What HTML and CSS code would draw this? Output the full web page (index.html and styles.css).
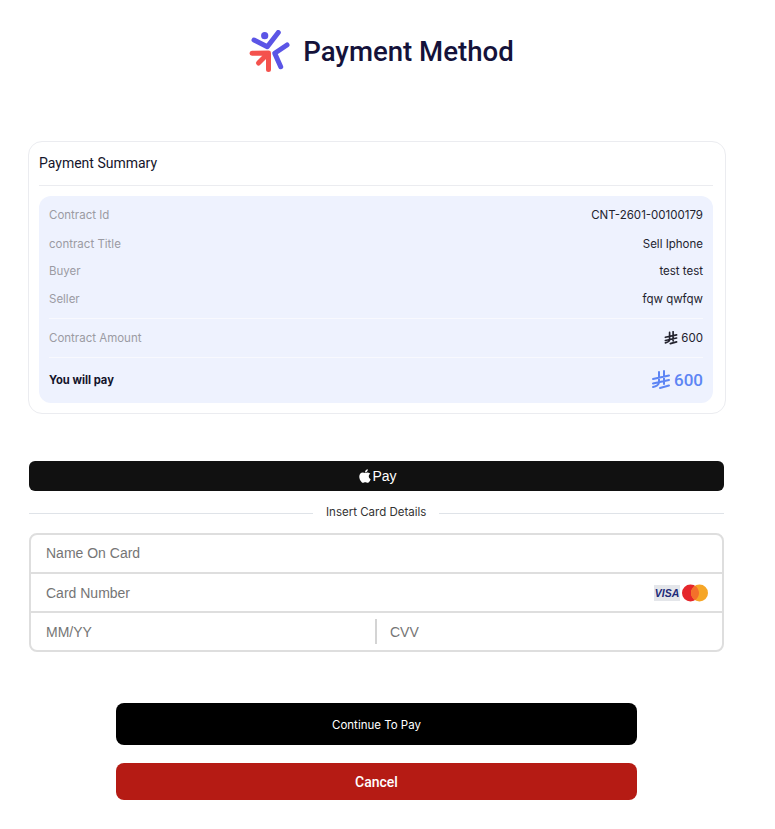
FILE: index.html
```html
<!DOCTYPE html>
<html lang="en">
<head>
  <meta charset="UTF-8">
  <title>Payment Method</title>
  <link rel="stylesheet" href="styles.css">
</head>
<body>
  <div class="page">
    <div class="header">
      <svg class="logo" viewBox="0 0 42 42" width="42" height="42">
        <circle cx="15.7" cy="5.7" r="3.6" fill="#5b55e6"/>
        <path d="M5 10 L18.3 16.7 L29.3 2.5" fill="none" stroke="#5b55e6" stroke-width="5" stroke-linecap="round" stroke-linejoin="round"/>
        <path d="M38 15 L25.7 23.3 L31.7 36.7" fill="none" stroke="#5b55e6" stroke-width="5" stroke-linecap="round" stroke-linejoin="round"/>
        <path d="M3 23.3 L19.5 23 L19.5 39.5" fill="none" stroke="#f4524d" stroke-width="5" stroke-linecap="round" stroke-linejoin="round"/>
        <path d="M9.5 33 L18 24.5" fill="none" stroke="#f4524d" stroke-width="5" stroke-linecap="round"/>
        <path d="M11 23 L19.5 23 L19.5 31.5 Z" fill="#f4524d"/>
      </svg>
      <h1 class="page-title">Payment Method</h1>
    </div>

    <div class="summary">
      <div class="summary-title">Payment Summary</div>
      <div class="details">
        <div class="row"><span class="label">Contract Id</span><span class="value">CNT-2601-00100179</span></div>
        <div class="row row-title"><span class="label">contract Title</span><span class="value">Sell Iphone</span></div>
        <div class="row"><span class="label">Buyer</span><span class="value">test test</span></div>
        <div class="row"><span class="label">Seller</span><span class="value">fqw qwfqw</span></div>
        <div class="row row-amount">
          <span class="label">Contract Amount</span>
          <span class="value amount">
            <svg class="riyal" viewBox="0 0 20 20" width="14" height="14"><path d="M8 2 L8 13 Q7 16 2 17 M13 1 L13 14 M2 9 L18 5.5 M2 13.5 L18 10 M9 18 L18 15.5" fill="none" stroke="currentColor" stroke-width="2.4" stroke-linecap="round"/></svg>
            600
          </span>
        </div>
        <div class="row row-total">
          <span class="total-label">You will pay</span>
          <span class="total-value">
            <svg class="riyal" viewBox="0 0 20 20" width="20" height="20"><path d="M8 2 L8 13 Q7 16 2 17 M13 1 L13 14 M2 9 L18 5.5 M2 13.5 L18 10 M9 18 L18 15.5" fill="none" stroke="currentColor" stroke-width="2" stroke-linecap="round"/></svg>
            600
          </span>
        </div>
      </div>
    </div>

    <div class="apple-pay">
      <svg class="apple-icon" viewBox="0 0 24 24" width="18" height="18"><path fill="#fff" d="M17.05 20.28c-.98.95-2.05.8-3.08.35-1.09-.46-2.09-.48-3.24 0-1.44.62-2.2.44-3.06-.35C2.79 15.25 3.51 7.59 9.05 7.31c1.35.07 2.29.74 3.08.8 1.18-.24 2.31-.93 3.57-.84 1.51.12 2.65.72 3.4 1.8-3.12 1.87-2.38 5.98.48 7.13-.57 1.5-1.31 2.99-2.54 4.09zM12.03 7.25c-.15-2.23 1.66-4.07 3.74-4.25.29 2.58-2.34 4.5-3.74 4.25z"/></svg>
      <span>Pay</span>
    </div>

    <div class="separator"><span>Insert Card Details</span></div>

    <div class="card-form">
      <div class="field field-name">Name On Card</div>
      <div class="field field-number">
        <span>Card Number</span>
        <span class="brands">
          <span class="visa">VISA</span>
          <svg viewBox="0 0 26 18" width="26" height="18">
            <circle cx="8.5" cy="9" r="8.5" fill="#e5262b"/>
            <circle cx="17.5" cy="9" r="8.5" fill="#f6a627"/>
            <path d="M13 1.8 A8.5 8.5 0 0 1 13 16.2 A8.5 8.5 0 0 1 13 1.8 Z" fill="#f4702a"/>
          </svg>
        </span>
      </div>
      <div class="field-split">
        <div class="field-half">MM/YY</div>
        <div class="field-half field-cvv">CVV</div>
      </div>
    </div>

    <div class="actions">
      <button class="btn btn-continue">Continue To Pay</button>
      <button class="btn btn-cancel">Cancel</button>
    </div>
  </div>
</body>
</html>
```

FILE: styles.css
```css
*{margin: 0;box-sizing: border-box;}
body{
  background: #fff;
  font-family: Roboto, "Liberation Sans", sans-serif;
  color: #14142b;
}
.page{
  width: 775px;
  padding: 30px 49px 0 28px;
}
.header{
  display: flex;
  align-items: center;
  justify-content: center;
  gap: 12px;
  height: 42px;
  padding-left: 9px;
}
.logo{
  flex: none;
}
.page-title{
  margin-top: 1px;
  font-size: 27.6px;
  font-weight: 500;
  color: #14123a;
}
.summary{
  margin-top: 69px;
  height: 273px;
  padding: 11px 12px 11px 10px;
  border: 1px solid #ebecf0;
  border-radius: 14px;
}
.summary-title{
  height: 33px;
  padding-top: 2px;
  font-size: 14px;
  line-height: 17px;
  border-bottom: 1px solid #ebecf0;
}
.details{
  margin-top: 10px;
  height: 207px;
  padding: 5px 10px 0;
  background: #eef2fe;
  border-radius: 12px;
  font-family: Inter, sans-serif;
}
.row{
  display: flex;
  justify-content: space-between;
  align-items: center;
  height: 28px;
  font-size: 11.5px;
}
.row-title{
  padding-top: 2px;
}
.label{
  color: #9b9ba3;
}
.value{
  color: #23232e;
}
.row-amount{
  margin-top: 5px;
  height: 40px;
  border-top: 1px solid #f8f9fe;
  border-bottom: 1px solid #f8f9fe;
}
.amount,
.total-value{
  display: flex;
  align-items: center;
  gap: 3px;
}
.row-total{
  height: 44px;
}
.total-label{
  font-size: 11.2px;
  font-weight: 700;
}
.total-value{
  font-family: Roboto, sans-serif;
  font-size: 17px;
  font-weight: 500;
  color: #5d85f4;
}
.apple-pay{
  display: flex;
  align-items: center;
  justify-content: center;
  margin: 47px 0 0 1px;
  width: 695px;
  height: 30px;
  background: #111;
  border-radius: 6px;
  color: #fff;
  font-family: "Liberation Sans", sans-serif;
  font-size: 14px;
}
.apple-icon{
  margin-right: -2px;
}
.separator{
  display: flex;
  align-items: center;
  gap: 13px;
  margin: 14px 0 0 1px;
  width: 695px;
  height: 16px;
  font-family: Inter, sans-serif;
  font-size: 11.5px;
  color: #333;
}
.separator span{
  margin-bottom: 3px;
}
.separator:before,
.separator:after{
  content: "";
  height: 1px;
  background: #dfe3e8;
}
.separator:before{
  flex: 284px 0 0;
}
.separator:after{
  flex: 1;
}
.card-form{
  margin: 12px 0 0 1px;
  width: 695px;
  height: 119px;
  border: 2px solid #dedede;
  border-radius: 8px;
  font-family: "Liberation Sans", sans-serif;
  font-size: 14px;
  color: #757575;
}
.field{
  display: flex;
  align-items: center;
  height: 39px;
  padding: 0 14px 0 15px;
  border-bottom: 2px solid #dedede;
}
.field-name{
  padding-bottom: 2px;
}
.field-number{
  justify-content: space-between;
}
.brands{
  display: flex;
  align-items: center;
  gap: 2px;
}
.visa{
  width: 26px;
  height: 16px;
  background: #e4e6ea;
  color: #1c2a78;
  font-size: 10.5px;
  font-weight: 700;
  font-style: italic;
  line-height: 16px;
  text-align: center;
}
.field-split{
  display: flex;
  align-items: center;
  height: 37px;
}
.field-half{
  flex: 344px 0 0;
  padding-left: 15px;
}
.field-cvv{
  flex: 1;
  height: 25px;
  line-height: 26px;
  padding-left: 13px;
  border-left: 2px solid #d4d4d4;
}
.actions{
  display: flex;
  flex-direction: column;
  align-items: center;
  gap: 18px;
  margin: 51px 0 0 1px;
  width: 695px;
}
.btn{
  width: 521px;
  border: 0;
  border-radius: 8px;
  color: #fff;
}
.btn-continue{
  height: 42px;
  padding-top: 2px;
  background: #000;
  font-family: Inter, sans-serif;
  font-size: 11.5px;
}
.btn-cancel{
  height: 37px;
  background: #b51b14;
  font-family: Roboto, sans-serif;
  font-size: 14px;
  font-weight: 500;
}
```
